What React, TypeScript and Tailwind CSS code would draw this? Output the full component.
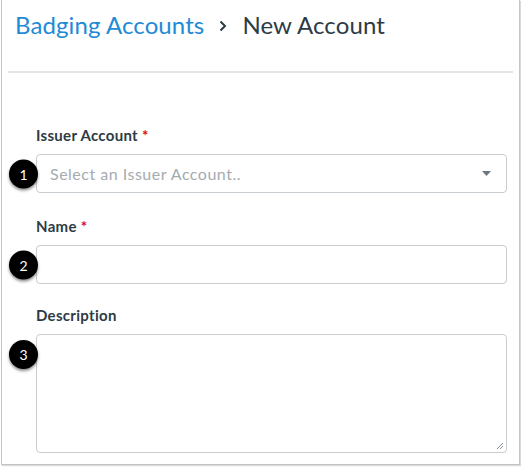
import React from "react";

function Step({ n }: { n: number }) {
  return (
    <div className="absolute left-[-28px] top-1/2 -translate-y-1/2 flex h-[29px] w-[29px] items-center justify-center rounded-full bg-black text-[14px] text-white shadow-[0_2px_3px_rgba(0,0,0,0.45)]">
      {n}
    </div>
  );
}

function Label({ text, required }: { text: string; required?: boolean }) {
  return (
    <div className="text-[15px] font-bold leading-[18px] tracking-[0.3px] text-[#2d3b45]">
      {text}
      {required && <span className="ml-[4px] text-[#e0061f]">*</span>}
    </div>
  );
}

export default function App() {
  return (
    <div className="h-[468px] w-[521px] bg-white" style={{ fontFamily: "Lato, 'Noto Sans', sans-serif" }}>
      <div className="ml-[1px] h-[465px] w-[519px] border-x border-b border-[#c4c4c4] shadow-[1px_1px_1px_rgba(0,0,0,0.15)]">
        <div className="flex items-center px-[13px] pt-[11px] text-[24px] leading-[28px] tracking-[0.1px]">
          <span className="text-[#1f8ad6]">Badging Accounts</span>
          <svg className="mx-[15px] mt-[2px]" width="8" height="12" viewBox="0 0 8 12">
            <path d="M1.5 1.5 L6 6 L1.5 10.5" fill="none" stroke="#2d3b45" strokeWidth="2" />
          </svg>
          <span className="text-[#2d3b45]">New Account</span>
        </div>
        <div className="mx-[6px] mt-[32px] h-[2px] bg-[#e2e6e9]" />

        <div className="flex flex-col pl-[34px] pr-[12px] pt-[53px]">
          <Label text="Issuer Account" required />
          <div className="relative mt-[10px] flex h-[39px] items-center justify-between rounded-[4px] border border-[#c7cdd1] pl-[13px] pr-[15px]">
            <Step n={1} />
            <span className="text-[16px] tracking-[0.5px] text-[#a5abaf]">Select an Issuer Account..</span>
            <svg width="9" height="5" viewBox="0 0 9 5">
              <path d="M0 0 H9 L4.5 5 Z" fill="#6b7780" />
            </svg>
          </div>

          <div className="mt-[24px]">
            <Label text="Name" required />
          </div>
          <div className="relative mt-[10px] h-[39px] rounded-[4px] border border-[#c7cdd1]">
            <Step n={2} />
          </div>

          <div className="mt-[22px]">
            <Label text="Description" />
          </div>
          <div className="relative mt-[10px] h-[119px] rounded-[4px] border border-[#c7cdd1]">
            <div className="absolute left-[-28px] top-[5px] flex h-[29px] w-[29px] items-center justify-center rounded-full bg-black text-[14px] text-white shadow-[0_2px_3px_rgba(0,0,0,0.45)]">
              3
            </div>
            <svg className="absolute bottom-[2px] right-[2px]" width="8" height="8" viewBox="0 0 8 8">
              <path d="M7 1 L1 7 M7 4 L4 7" stroke="#8a8f93" strokeWidth="1" />
            </svg>
          </div>
        </div>
      </div>
    </div>
  );
}
